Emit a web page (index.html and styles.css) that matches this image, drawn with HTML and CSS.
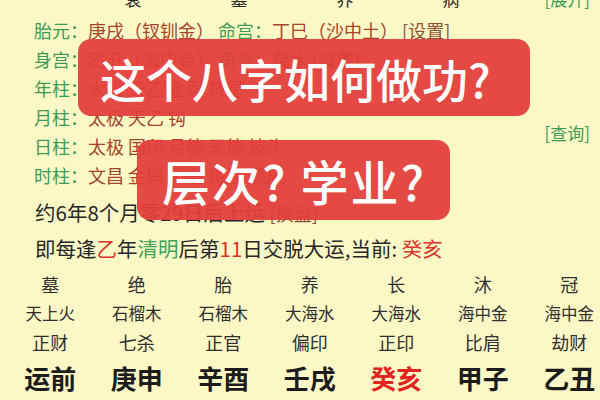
FILE: index.html
```html
<!DOCTYPE html>
<html lang="zh-CN">
<head>
<meta charset="utf-8">
<title>八字排盘</title>
<link rel="stylesheet" href="styles.css">
</head>
<body>
<div class="page">
  <div class="toprow">
    <span class="cell">衰</span>
    <span class="cell">墓</span>
    <span class="cell">养</span>
    <span class="cell">病</span>
    <span class="link more">[展开]</span>
  </div>

  <div class="info">
    <div class="line"><span class="g">胎元：</span><span class="r">庚戌（钗钏金） </span><span class="g">命宫：</span><span class="r">丁巳（沙中土） </span><span class="br">[设置]</span></div>
    <div class="line"><span class="g">身宫：</span><span class="r">乙丑（海中金） </span><span class="g">司令：</span><span class="r">癸水 </span><span class="br">[设置]</span></div>
    <div class="line"><span class="g">年柱：</span><span class="r">太极 天乙 金舆 将星</span></div>
    <div class="line"><span class="g">月柱：</span><span class="r">太极 天乙 钩</span></div>
    <div class="line"><span class="g">日柱：</span><span class="r">太极 国印 月德 天德 披头</span></div>
    <div class="line"><span class="g">时柱：</span><span class="r">文昌 金舆 天医 将星 孤辰</span></div>
    <div class="query">[查询]</div>
  </div>

  <div class="yun">
    <div class="yline">约6年8个月零29日后上运 <span class="br small">[换盘]</span></div>
    <div class="yline">即每逢<span class="red">乙</span>年<span class="grn">清明</span>后第<span class="red">11</span>日交脱大运,当前: <span class="red">癸亥</span></div>
  </div>

  <div class="dayun">
    <div class="c st">墓</div><div class="c st">绝</div><div class="c st">胎</div><div class="c st">养</div><div class="c st">长</div><div class="c st">沐</div><div class="c st">冠</div>
    <div class="c ny">天上火</div><div class="c ny">石榴木</div><div class="c ny">石榴木</div><div class="c ny">大海水</div><div class="c ny">大海水</div><div class="c ny">海中金</div><div class="c ny">海中金</div>
    <div class="c ss">正财</div><div class="c ss">七杀</div><div class="c ss">正官</div><div class="c ss">偏印</div><div class="c ss">正印</div><div class="c ss">比肩</div><div class="c ss">劫财</div>
    <div class="c gz">运前</div><div class="c gz">庚申</div><div class="c gz">辛酉</div><div class="c gz">壬戌</div><div class="c gz cur">癸亥</div><div class="c gz">甲子</div><div class="c gz">乙丑</div>
  </div>

  <div class="banner b1">这个八字如何做功?</div>
  <div class="banner b2">层次? 学业?</div>
</div>
</body>
</html>
```

FILE: styles.css
```css
html, body {
  margin: 0;
  padding: 0;
}
body {
  background: #fcf8c6;
  font-family: "Noto Sans CJK SC", "Noto Sans", sans-serif;
  color: #2a2a2a;
  width: 600px;
  height: 400px;
  overflow: hidden;
}
.page {
  position: relative;
  width: 600px;
  height: 400px;
  overflow: hidden;
}
.toprow {
  display: flex;
  align-items: center;
  height: 20px;
  margin-top: -11px;
  padding-left: 80px;
  font-size: 17px;
  line-height: 20px;
}
.toprow .cell {
  width: 106px;
  text-align: center;
}
.link, .query {
  color: #3f9a57;
}
.toprow .more {
  margin-left: auto;
  margin-right: 10px;
}
.info {
  display: grid;
  grid-template-columns: 1fr auto;
  grid-auto-rows: 29px;
  margin-top: 7px;
  padding-left: 34px;
  padding-right: 10px;
  font-size: 18px;
  line-height: 29px;
}
.info .line {
  grid-column: 1;
  white-space: nowrap;
}
.info .query {
  grid-column: 2;
  grid-row: 4 / 6;
  align-self: center;
  font-size: 17px;
}
.g { color: #3f9a57; }
.r { color: #a6432b; }
.br { color: #8c5038; }
.yun {
  margin-top: 5px;
  padding-left: 35px;
  font-size: 20.5px;
  line-height: 35px;
  color: #262626;
}
.yline { white-space: nowrap; }
.small { font-size: 18px; }
.red { color: #d9342a; }
.grn { color: #3fa55c; }
.dayun {
  display: grid;
  grid-template-columns: repeat(7, 86.5px);
  grid-template-rows: 28px 30px 27px 44px;
  margin-top: 4px;
  padding-left: 7px;
  text-align: center;
  color: #2f2f2f;
}
.c {
  display: flex;
  align-items: center;
  justify-content: center;
  white-space: nowrap;
}
.st { font-size: 18px; }
.ny { font-size: 16.5px; }
.ss { font-size: 18px; }
.gz { font-size: 26px; font-weight: 700; color: #1c1c1c; }
.gz.cur { color: #e0241f; }
.banner {
  position: absolute;
  background: rgba(226, 62, 58, 0.94);
  color: #fff;
  border-radius: 13px;
  font-weight: 500;
  white-space: nowrap;
  display: flex;
  align-items: center;
}
.b1 {
  left: 78px;
  top: 39px;
  width: 452px;
  height: 77px;
  padding-left: 22px;
  box-sizing: border-box;
  font-size: 46px;
}
.b2 {
  left: 137px;
  top: 140px;
  width: 313px;
  height: 80px;
  padding-left: 25px;
  box-sizing: border-box;
  font-size: 48px;
  letter-spacing: 2px;
}
```
